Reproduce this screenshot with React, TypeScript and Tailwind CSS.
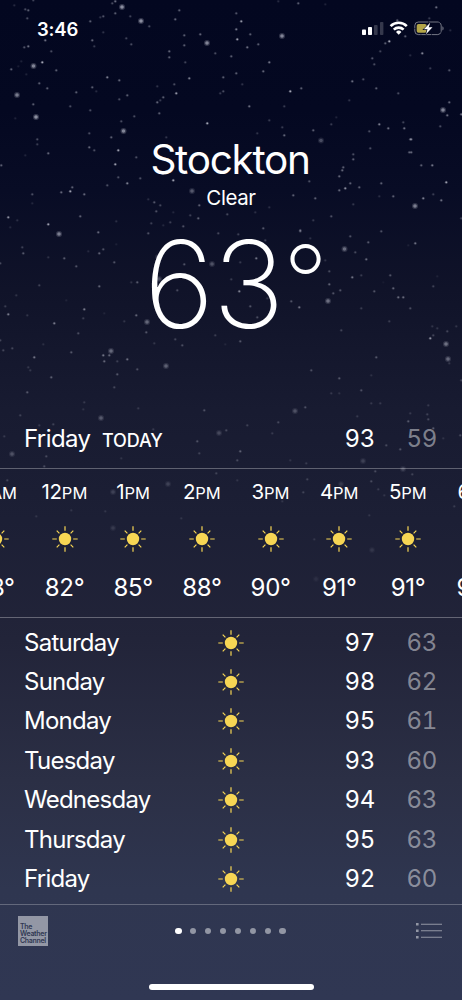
type Hour = { label: string; period: string; temp: number };
type Day = { name: string; high: number; low: number };

const hours: Hour[] = [
  { label: '11', period: 'AM', temp: 78 },
  { label: '12', period: 'PM', temp: 82 },
  { label: '1', period: 'PM', temp: 85 },
  { label: '2', period: 'PM', temp: 88 },
  { label: '3', period: 'PM', temp: 90 },
  { label: '4', period: 'PM', temp: 91 },
  { label: '5', period: 'PM', temp: 91 },
  { label: '6', period: 'PM', temp: 90 },
];

const days: Day[] = [
  { name: 'Saturday', high: 97, low: 63 },
  { name: 'Sunday', high: 98, low: 62 },
  { name: 'Monday', high: 95, low: 61 },
  { name: 'Tuesday', high: 93, low: 60 },
  { name: 'Wednesday', high: 94, low: 63 },
  { name: 'Thursday', high: 95, low: 63 },
  { name: 'Friday', high: 92, low: 60 },
];

// x, y, opacity
const smallStars = [
  [14, 5, 0.2], [33, 0, 0.35], [25, 9, 0.4], [28, 10, 0.5], [27, 18, 0.4], [45, 40, 0.6], [24, 47, 0.45], [28, 46, 0.6],
  [51, 51, 0.4], [42, 62, 0.95], [11, 69, 0.5], [56, 70, 0.5], [21, 61, 0.15], [18, 66, 0.12], [26, 74, 0.15],
  [39, 83, 0.5], [47, 88, 0.5], [76, 92, 0.5], [92, 87, 0.5], [96, 91, 0.2], [107, 77, 0.7], [119, 80, 0.55],
  [119, 99, 0.4], [127, 95, 0.5], [33, 104, 0.5], [70, 106, 0.4], [90, 110, 0.4], [15, 118, 0.15], [134, 116, 0.4],
  [121, 121, 0.4], [37, 139, 0.4], [89, 133, 0.4], [111, 137, 0.5], [90, 21, 0.5], [100, 17, 0.25], [103, 16, 0.45],
  [112, 3, 0.4], [115, 1, 0.6], [115, 13, 0.5], [130, 16, 0.35], [149, 26, 0.4], [103, 32, 0.25], [92, 40, 0.55],
  [94, 46, 0.3], [126, 38, 0.35], [131, 44, 0.4], [179, 10, 0.5], [175, 19, 0.55], [184, 35, 0.5], [200, 34, 0.55],
  [184, 45, 0.5], [169, 51, 0.55], [169, 57, 0.5], [185, 62, 0.35], [215, 53, 0.4], [189, 78, 0.7], [174, 84, 0.4],
  [157, 86, 0.25], [176, 93, 0.85], [163, 97, 0.5], [160, 100, 0.3], [157, 102, 0.55], [159, 113, 0.5], [223, 77, 0.5],
  [223, 91, 0.4], [220, 93, 0.3], [207, 123, 0.95], [166, 137, 0.25], [278, 1, 0.2], [298, 3, 0.5], [325, 4, 0.15],
  [236, 13, 0.45], [241, 21, 0.85], [236, 29, 0.65], [237, 39, 0.9], [250, 34, 0.5], [247, 47, 0.6], [258, 44, 0.5],
  [231, 56, 0.5], [269, 62, 0.65], [263, 71, 0.55], [236, 73, 0.5], [242, 84, 0.25], [301, 88, 0.5], [290, 91, 0.95],
  [249, 106, 0.6], [284, 106, 0.3], [389, 41, 0.95], [385, 43, 0.5], [380, 51, 0.35], [405, 36, 0.5], [422, 53, 0.75],
  [410, 55, 0.2], [397, 20, 0.5], [429, 18, 0.3], [436, 7, 0.6], [450, 30, 0.2], [372, 58, 0.45], [374, 64, 0.4],
  [430, 68, 0.3], [449, 70, 0.45], [352, 81, 0.6], [363, 79, 0.4], [376, 88, 0.5], [349, 100, 0.25], [398, 93, 0.4],
  [449, 102, 0.55], [447, 115, 0.6], [461, 114, 0.6], [336, 117, 0.15], [269, 120, 0.3], [282, 127, 0.3], [331, 124, 0.3],
  [379, 124, 0.7], [388, 128, 0.6], [403, 122, 0.35], [404, 128, 0.6], [440, 126, 0.4], [369, 131, 0.4], [313, 130, 0.5],
  [257, 133, 0.25], [284, 135, 0.55], [410, 139, 0.55], [411, 139, 0.6], [411, 152, 0.55], [409, 152, 0.5], [353, 154, 0.4],
  [353, 159, 0.5], [370, 148, 0.4], [343, 167, 0.5], [342, 170, 0.55], [339, 176, 0.55], [350, 183, 0.5], [345, 188, 0.8],
  [339, 190, 0.55], [359, 187, 0.5], [309, 181, 0.4], [315, 198, 0.5], [381, 183, 0.5], [379, 196, 0.2], [393, 196, 0.5],
  [421, 165, 0.5], [432, 165, 0.65], [446, 182, 0.9], [433, 194, 0.3], [423, 198, 0.7], [441, 200, 0.6], [461, 218, 0.3],
  [353, 204, 0.25], [331, 216, 0.4], [313, 220, 0.25], [381, 231, 0.4], [300, 231, 0.4], [310, 238, 0.2], [350, 236, 0.4],
  [368, 242, 0.45], [355, 252, 0.35], [366, 259, 0.55], [408, 245, 0.1], [415, 243, 0.6], [325, 260, 0.2], [329, 271, 0.35],
  [361, 275, 0.25], [352, 277, 0.6], [390, 275, 0.4], [437, 276, 0.1], [329, 284, 0.5], [340, 290, 0.4], [333, 293, 0.4],
  [374, 291, 0.4], [383, 282, 0.05], [393, 288, 0.5], [398, 297, 0.55], [403, 297, 0.55], [433, 286, 0.3], [361, 308, 0.25],
  [410, 308, 0.35], [389, 321, 0.25], [341, 330, 0.3], [432, 326, 0.2], [437, 328, 0.2], [456, 326, 0.2], [447, 331, 0.3],
  [433, 335, 0.3], [430, 338, 0.8], [449, 363, 0.2], [376, 357, 0.4], [311, 370, 0.35], [371, 375, 0.15], [339, 378, 0.4],
  [361, 390, 0.35], [331, 393, 0.2], [339, 393, 0.15], [371, 403, 0.2], [380, 403, 0.2], [305, 407, 0.35], [428, 405, 0.2],
  [410, 413, 0.2], [427, 414, 0.25], [357, 416, 0.2], [461, 380, 0.25], [1, 165, 0.5], [25, 155, 0.15], [37, 144, 0.3],
  [48, 153, 0.55], [89, 147, 0.55], [94, 150, 0.4], [118, 150, 0.9], [115, 164, 0.9], [136, 157, 0.4], [118, 177, 0.4],
  [107, 185, 0.4], [127, 183, 0.7], [140, 178, 0.4], [72, 187, 0.5], [70, 191, 0.9], [61, 192, 0.55], [84, 194, 0.55],
  [32, 194, 0.4], [32, 203, 0.15], [8, 217, 0.8], [17, 220, 0.2], [10, 227, 0.15], [48, 224, 0.9], [80, 216, 0.5],
  [98, 232, 0.55], [116, 221, 0.2], [148, 199, 0.2], [154, 202, 0.45], [160, 205, 0.35], [156, 211, 0.4], [173, 212, 0.15],
  [151, 223, 0.3], [170, 222, 0.3], [163, 225, 0.15], [148, 233, 0.4], [173, 180, 0.9], [199, 205, 0.5], [190, 215, 0.3],
  [198, 218, 0.5], [227, 214, 0.35], [183, 226, 0.4], [218, 233, 0.35], [238, 234, 0.3], [263, 228, 0.45], [265, 240, 0.3],
  [293, 195, 0.5], [269, 207, 0.2], [255, 212, 0.2], [300, 230, 0.5], [116, 244, 0.1], [22, 247, 0.3],
  [23, 253, 0.45], [48, 257, 0.2], [64, 258, 0.45], [76, 266, 0.4], [88, 251, 0.15], [99, 253, 0.5], [103, 249, 0.4],
  [114, 262, 0.4], [0, 263, 0.35], [39, 285, 0.3], [16, 295, 0.2], [66, 300, 0.1], [99, 286, 0.5], [131, 282, 0.2],
  [137, 282, 0.45], [5, 306, 0.25], [8, 314, 0.65], [27, 315, 0.2], [84, 309, 0.65], [83, 318, 0.25], [104, 313, 0.1],
  [54, 323, 0.65], [78, 333, 0.35], [124, 321, 0.2], [136, 315, 0.5], [146, 332, 0.4], [154, 343, 0.2], [0, 340, 0.3],
  [3, 350, 0.3], [12, 348, 0.3], [43, 344, 0.15], [71, 352, 0.4], [34, 357, 0.6], [103, 355, 0.6], [104, 361, 0.5],
  [109, 355, 0.5], [127, 359, 0.55], [117, 361, 0.25], [137, 369, 0.35], [117, 374, 0.4], [28, 367, 0.2], [30, 370, 0.2],
  [51, 377, 0.45], [27, 392, 0.4], [114, 387, 0.3], [84, 402, 0.2], [83, 409, 0.15], [138, 408, 0.2], [20, 415, 0.25],
  [184, 264, 0.4], [256, 258, 0.6], [240, 262, 0.25], [231, 279, 0.25], [177, 290, 0.35], [239, 291, 0.7], [267, 298, 0.2],
  [250, 306, 0.4], [291, 301, 0.4], [299, 307, 0.6], [257, 317, 0.35], [175, 339, 0.3], [215, 335, 0.25], [240, 341, 0.4],
  [182, 345, 0.35], [225, 344, 0.1], [204, 410, 0.35], [197, 441, 0.35], [226, 430, 0.3], [199, 453, 0.25], [39, 425, 0.2],
  [53, 424, 0.25], [4, 436, 0.2], [46, 456, 0.3], [44, 466, 0.3], [121, 458, 0.15], [138, 437, 0.15], [153, 429, 0.2],
  [7, 480, 0.25], [36, 516, 0.15], [71, 510, 0.15], [105, 511, 0.15], [181, 518, 0.15], [216, 473, 0.25], [247, 425, 0.25],
  [278, 422, 0.3], [272, 433, 0.2], [240, 451, 0.45], [237, 460, 0.3], [290, 460, 0.15], [306, 463, 0.2],
  [408, 421, 0.4], [428, 419, 0.3], [433, 428, 0.4], [386, 445, 0.3], [400, 449, 0.35],
  [443, 438, 0.15], [460, 435, 0.3], [237, 480, 0.15], [307, 479, 0.25], [303, 492, 0.25], [375, 471, 0.3], [371, 481, 0.3],
  [412, 474, 0.25], [384, 495, 0.15], [378, 489, 0.2], [454, 506, 0.2], [369, 515, 0.15], [282, 501, 0.15], [314, 539, 0.15],
];

const glowStars = [
  [122, 7, 0.7], [141, 21, 0.7], [207, 43, 0.65], [33.5, 66, 0.65], [17, 95, 0.6], [36, 117, 0.7], [123.5, 131, 0.65],
  [282, 36, 0.65], [443, 110, 0.65], [321, 140.5, 0.35], [59, 234, 0.6], [192, 191, 0.4], [415, 206, 0.6], [344.5, 249, 0.5],
  [328, 301, 0.5], [446, 344, 0.5], [448, 359, 0.45], [147, 322, 0.45], [111, 351, 0.45], [166, 366, 0.4], [158, 257, 0.3],
  [159, 279, 0.3], [212, 264, 0.35], [101, 418, 0.35], [12, 454, 0.3], [219, 433, 0.25], [168, 484, 0.2], [113, 492, 0.2],
  [113, 528, 0.15], [295, 411, 0.3], [363, 461, 0.2], [403, 469, 0.25], [341, 484, 0.15], [372, 550, 0.12], [316, 579, 0.08],
];

function Starfield() {
  return (
    <svg className="absolute inset-0 h-[1000px] w-[462px]" viewBox="0 0 462 1000" fill="#e4e6f2">
      {smallStars.map(([x, y, o], i) => (
        <g key={i} opacity={o * 0.75}>
          <circle cx={x + 0.3} cy={y + 0.3} r={1.5} opacity={0.35} />
          <circle cx={x + 0.3} cy={y + 0.3} r={0.9} />
        </g>
      ))}
      {glowStars.map(([x, y, o], i) => (
        <g key={i} opacity={o}>
          <circle cx={x} cy={y} r={3} opacity={0.3} />
          <circle cx={x} cy={y} r={1.8} opacity={0.8} />
        </g>
      ))}
    </svg>
  );
}

function Sun() {
  return (
    <svg className="size-[26px] shrink-0" viewBox="-13 -13 26 26" stroke="#f7d654" strokeWidth="1.2">
      <circle r="6.2" fill="#f7d654" stroke="none" />
      <path d="M0-12.7v4.5M0 8.2v4.5M-12.7 0h4.5M8.2 0h4.5M-8.3-8.3l2.7 2.7M5.6 5.6l2.7 2.7M-8.3 8.3l2.7-2.7M5.6-5.6l2.7-2.7" />
    </svg>
  );
}

function StatusBar() {
  return (
    <div className="flex h-14 items-center justify-between pr-[18px] pl-[37px]">
      <span className="pt-0.5 text-[18.5px] leading-none font-semibold tracking-[-0.2px]">3:46</span>
      <svg className="h-4 w-[83px]" viewBox="361 20 83 16">
        <g fill="#fff">
          <rect x="362" y="29.5" width="4" height="5.5" rx="0.8" />
          <rect x="368" y="27" width="4" height="8" rx="0.8" />
          <rect x="374" y="25" width="3.6" height="10" rx="0.8" opacity="0.2" />
          <rect x="380" y="22" width="3.4" height="13" rx="0.8" opacity="0.2" />
        </g>
        <g fill="none" stroke="#fff" strokeWidth="2.6">
          <path d="M390.6 26.2a11.4 11.4 0 0 1 16.2 0" />
          <path d="M393.8 29.6a7 7 0 0 1 9.8 0" />
        </g>
        <path d="M398.7 34.7l-2.7-2.8a3.9 3.9 0 0 1 5.4 0z" fill="#fff" />
        <rect x="414.8" y="22" width="26.4" height="12.6" rx="3.6" fill="none" stroke="#fff" strokeOpacity="0.45" strokeDasharray="10 0.5" />
        <path d="M442.4 26.2c1.6.7 1.6 3.6 0 4.3z" fill="#fff" opacity="0.45" />
        <rect x="416.7" y="24" width="10" height="8.8" rx="1.8" fill="#b3a548" />
        <path d="M430.2 22.8l-6.4 6.5h3.7l-1.5 5 6.5-7h-3.8z" fill="#fff" stroke="#050922" strokeWidth="1.2" paintOrder="stroke" />
      </svg>
    </div>
  );
}

function CurrentConditions() {
  return (
    <header className="flex h-[354px] flex-col items-center pt-20">
      <h1 className="pr-0.5 text-[40.5px] leading-12 font-normal tracking-[-1.3px]">Stockton</h1>
      <p className="mt-0.5 text-[20.5px] leading-6 tracking-[-0.4px]">Clear</p>
      <div className="mt-[11px] ml-2 text-[121px] leading-[126px] font-extralight tracking-[-1.5px]">
        63
        <span className="align-[12px] text-[98px] leading-0">°</span>
      </div>
    </header>
  );
}

function HourlyForecast() {
  return (
    <section className="-ml-[38.5px] flex h-[150px] w-[550px] border-y border-white/30">
      {hours.map((hour) => (
        <div key={hour.label} className="flex w-[68.7px] shrink-0 flex-col items-center pt-[11px]">
          <div className="text-[20.5px] leading-6 tracking-[-0.3px]">
            {hour.label}
            <span className="text-[16.5px] tracking-[0.1px]">{hour.period}</span>
          </div>
          <div className="mt-[21px] mb-[22px]">
            <Sun />
          </div>
          <div className="text-[24px] leading-7 tracking-[-0.3px]">{hour.temp}°</div>
        </div>
      ))}
    </section>
  );
}

function DailyForecast() {
  return (
    <section className="h-[287px] border-b border-white/25 pt-[5px]">
      {days.map((day) => (
        <div key={day.name} className="grid h-[39.4px] grid-cols-[193.5px_26px_101px_1fr] items-center pl-6 text-[24px] leading-7">
          <span className="tracking-[-0.75px]">{day.name}</span>
          <Sun />
          <span className="pl-[101px] tracking-[-0.3px] tabular-nums">{day.high}</span>
          <span className="pl-[62px] tracking-[-0.3px] text-white/45 tabular-nums">{day.low}</span>
        </div>
      ))}
    </section>
  );
}

function BottomBar() {
  return (
    <footer className="flex h-[52px] items-center justify-between pr-5 pl-[18px]">
      <div className="flex size-[30px] flex-col justify-end bg-[#9397a5] pb-0.5 pl-0.5 text-[7px] leading-[7px] font-semibold tracking-[-0.3px] text-[#303753]">
        <span>The</span>
        <span>Weather</span>
        <span>Channel</span>
      </div>
      <div className="flex gap-[8.5px] pr-[3px]">
        {hours.map((hour, i) => (
          <span key={hour.label} className={i === 0 ? 'size-[6.4px] rounded-full bg-white' : 'size-[6.4px] rounded-full bg-[#9296a4]'} />
        ))}
      </div>
      <svg className="h-5 w-[26px]" viewBox="0 0 26 20" fill="#9296a4">
        <path d="M0 2h2.6v2.6H0zM0 8.5h2.6v2.6H0zM0 15h2.6v2.6H0zM5 2.8h21v1H5zM5 9.3h21v1H5zM5 15.8h21v1H5z" />
      </svg>
    </footer>
  );
}

export default function App() {
  return (
    <main className="relative h-[1000px] w-[462px] overflow-hidden bg-[linear-gradient(180deg,#030720_0px,#040821_110px,#080c25_190px,#101329_290px,#181b31_410px,#1c1f35_520px,#222439_640px,#2b2f45_780px,#2f3650_890px,#303753_1000px)] font-['Inter',sans-serif] text-white">
      <Starfield />
      <div className="relative flex flex-col">
        <StatusBar />
        <CurrentConditions />
        <div className="grid h-[58px] grid-cols-[78px_242.5px_62px_1fr] items-baseline pt-[15px] pl-6 text-[24px] leading-7">
          <span className="tracking-[-0.6px]">Friday</span>
          <span className="text-[18px] font-medium tracking-[-0.1px]">TODAY</span>
          <span className="tracking-[-0.3px] tabular-nums">93</span>
          <span className="tracking-[-0.3px] text-white/45 tabular-nums">59</span>
        </div>
        <HourlyForecast />
        <DailyForecast />
        <BottomBar />
        <div className="mx-auto mt-[27px] h-1.5 w-[165px] rounded-full bg-white" />
      </div>
    </main>
  );
}
